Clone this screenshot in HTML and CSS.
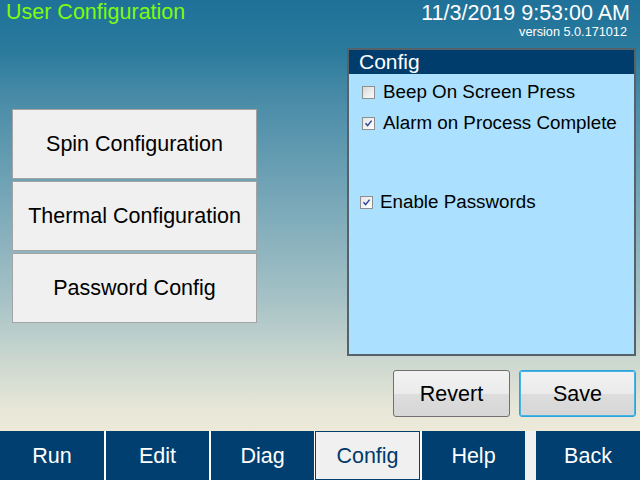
FILE: index.html
```html
<!DOCTYPE html>
<html>
<head>
<meta charset="utf-8">
<title>User Configuration</title>
<link rel="stylesheet" href="styles.css">
</head>
<body>
<div class="screen">
  <header class="top">
    <div class="title">User Configuration</div>
    <div class="stamp">
      <div class="date">11/3/2019 9:53:00 AM</div>
      <div class="version">version 5.0.171012</div>
    </div>
  </header>

  <main class="main">
    <div class="menu">
      <button class="menu-btn">Spin Configuration</button>
      <button class="menu-btn">Thermal Configuration</button>
      <button class="menu-btn">Password Config</button>
    </div>

    <section class="panel">
      <div class="panel-head">Config</div>
      <div class="panel-body">
        <label class="opt">
          <span class="box"></span>
          <span class="opt-text">Beep On Screen Press</span>
        </label>
        <label class="opt">
          <span class="box checked"><svg viewBox="0 0 11 11" width="11" height="11"><path d="M2.5 5.3 L4.6 7.6 L8.6 2.6" fill="none" stroke="#2c46a0" stroke-width="1.5"/></svg></span>
          <span class="opt-text">Alarm on Process Complete</span>
        </label>
        <label class="opt opt-low">
          <span class="box checked"><svg viewBox="0 0 11 11" width="11" height="11"><path d="M2.5 5.3 L4.6 7.6 L8.6 2.6" fill="none" stroke="#2c46a0" stroke-width="1.5"/></svg></span>
          <span class="opt-text">Enable Passwords</span>
        </label>
      </div>
    </section>
  </main>

  <div class="actions">
    <button class="act">Revert</button>
    <button class="act act-default">Save</button>
  </div>

  <nav class="nav">
    <button class="tab w104">Run</button>
    <button class="tab w103 g2">Edit</button>
    <button class="tab w103 g2">Diag</button>
    <button class="tab tab-on w105 g1">Config</button>
    <button class="tab w103 g2">Help</button>
    <div class="spacer"></div>
    <button class="tab w104">Back</button>
  </nav>
</div>
</body>
</html>
```

FILE: styles.css
```css
html, body {
  margin: 0;
  padding: 0;
}
body {
  width: 640px;
  height: 480px;
  overflow: hidden;
  font-family: "Liberation Sans", Arial, sans-serif;
}
.screen {
  width: 640px;
  height: 480px;
  display: flex;
  flex-direction: column;
  background: linear-gradient(to bottom,
    #1f7199 0px,
    #2a7a9c 50px,
    #4a8ca8 100px,
    #77a7b8 200px,
    #a6c2c6 300px,
    #cbd7cf 360px,
    #e8e7d8 410px,
    #ece9d8 431px);
}
button {
  font-family: inherit;
  margin: 0;
  padding: 0;
  cursor: default;
}

/* header */
.top {
  height: 48px;
  display: flex;
  justify-content: space-between;
  align-items: flex-start;
}
.title {
  color: #7cfc10;
  font-size: 21.5px;
  line-height: 24px;
  padding-left: 6px;
}
.stamp {
  display: flex;
  flex-direction: column;
  align-items: flex-end;
  color: #ffffff;
}
.date {
  font-size: 21.5px;
  line-height: 24px;
  padding-top: 1px;
  padding-right: 10px;
}
.version {
  font-size: 12.7px;
  line-height: 15px;
  padding-right: 13px;
}

/* main */
.main {
  display: flex;
  justify-content: space-between;
  height: 308px;
}
.menu {
  display: flex;
  flex-direction: column;
  gap: 2px;
  padding-top: 61px;
  padding-left: 12px;
}
.menu-btn {
  width: 245px;
  height: 70px;
  background: #f0f0f0;
  border: 1px solid #a3a3a3;
  font-size: 21.5px;
  color: #000;
}
.panel {
  width: 289px;
  height: 308px;
  box-sizing: border-box;
  margin-right: 4px;
  border: 2px solid #56626a;
  background: #abe0fe;
  display: flex;
  flex-direction: column;
}
.panel-head {
  height: 24px;
  background: #003d6c;
  color: #ffffff;
  font-size: 21px;
  line-height: 24px;
  padding-left: 10px;
}
.panel-body {
  display: flex;
  flex-direction: column;
  gap: 11px;
  padding-top: 8px;
}
.opt {
  display: flex;
  align-items: center;
  gap: 8px;
  height: 20px;
  padding-left: 13px;
  font-size: 18.8px;
  line-height: 20px;
  color: #000;
}
.opt-low {
  margin-top: 48px;
  padding-left: 11px;
  gap: 7px;
}
.box {
  width: 13px;
  height: 13px;
  box-sizing: border-box;
  border: 1px solid #8e8f8f;
  background: linear-gradient(135deg, #d8d8d8 0%, #ededed 55%, #fafafa 100%);
  display: flex;
  align-items: center;
  justify-content: center;
}
.box.checked {
  background: linear-gradient(135deg, #e4e4e4 0%, #f4f4f4 55%, #ffffff 100%);
}

/* actions */
.actions {
  display: flex;
  justify-content: flex-end;
  gap: 9px;
  padding-right: 4px;
  padding-top: 14px;
  height: 61px;
  box-sizing: border-box;
}
.act {
  width: 117px;
  height: 47px;
  border: 1px solid #707070;
  border-radius: 3px;
  background: linear-gradient(to bottom, #f2f2f2 0%, #ebebeb 50%, #dddddd 51%, #d6d6d6 100%);
  font-size: 21.5px;
  color: #000;
  padding-top: 2px;
}
.act-default {
  border: 1px solid #2aa4dc;
  box-shadow: inset 0 0 0 1px #48b4e6;
}

/* nav */
.nav {
  display: flex;
  height: 49px;
  margin-top: auto;
  background: #ffffff;
}
.tab {
  height: 49px;
  background: #003f70;
  color: #ffffff;
  border: none;
  font-size: 21.5px;
  padding-top: 2px;
}
.tab-on {
  background: #f0f0f0;
  color: #00396b;
  border: 1px solid #003f70;
}
.w103 { width: 103px; }
.w104 { width: 104px; }
.w105 { width: 105px; }
.g1 { margin-left: 1px; }
.g2 { margin-left: 2px; }
.spacer {
  width: 11px;
  background: #f0f0f0;
}
```
